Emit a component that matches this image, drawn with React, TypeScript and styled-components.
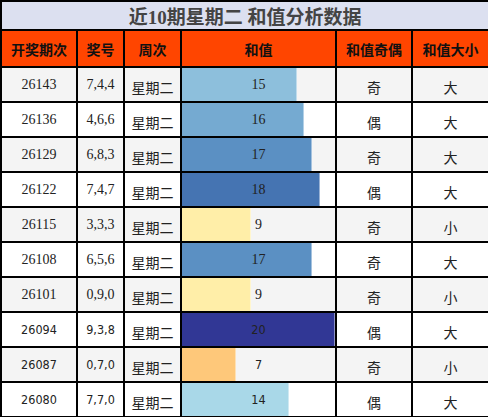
import React from 'react'
import styled, { createGlobalStyle } from 'styled-components'

const GlobalStyle = createGlobalStyle`
  html, body {
    margin: 0;
    padding: 0;
    background: #ffffff;
  }
`

interface Draw {
  issue: string
  digits: string
  weekday: string
  sum: number
  parity: string
  size: string
  sans?: boolean
}

const draws: Draw[] = [
  { issue: '26143', digits: '7,4,4', weekday: '星期二', sum: 15, parity: '奇', size: '大' },
  { issue: '26136', digits: '4,6,6', weekday: '星期二', sum: 16, parity: '偶', size: '大' },
  { issue: '26129', digits: '6,8,3', weekday: '星期二', sum: 17, parity: '奇', size: '大' },
  { issue: '26122', digits: '7,4,7', weekday: '星期二', sum: 18, parity: '偶', size: '大' },
  { issue: '26115', digits: '3,3,3', weekday: '星期二', sum: 9, parity: '奇', size: '小' },
  { issue: '26108', digits: '6,5,6', weekday: '星期二', sum: 17, parity: '奇', size: '大' },
  { issue: '26101', digits: '0,9,0', weekday: '星期二', sum: 9, parity: '奇', size: '小' },
  { issue: '26094', digits: '9,3,8', weekday: '星期二', sum: 20, parity: '偶', size: '大', sans: true },
  { issue: '26087', digits: '0,7,0', weekday: '星期二', sum: 7, parity: '奇', size: '小', sans: true },
  { issue: '26080', digits: '7,7,0', weekday: '星期二', sum: 14, parity: '偶', size: '大', sans: true },
]

const SUM_MAX = 20

const barColors: Record<number, string> = {
  7: '#fec87a',
  9: '#ffeea8',
  14: '#a9d8e8',
  15: '#8dbfdc',
  16: '#75aad1',
  17: '#5b90c3',
  18: '#4574b2',
  20: '#313795',
}

const SERIF = `"Liberation Serif", "Noto Sans CJK SC", serif`
const SANS = `"DejaVu Sans Condensed", "DejaVu Sans", "Noto Sans CJK SC", sans-serif`

const Table = styled.table`
  width: 488px;
  table-layout: fixed;
  border-collapse: collapse;
  border: 2px solid #000;
  font-family: ${SERIF};
  font-size: 14px;
  color: #222;
`

const TitleRow = styled.tr`
  height: 29px;
  background: #dce0f0;
`

const Title = styled.th`
  padding: 0;
  font-size: 19px;
  font-weight: bold;
  color: #444;
  text-align: center;
  border-bottom: 2px solid #000;
`

const HeadRow = styled.tr`
  height: 37px;
  background: #ff4500;
`

const HeadCell = styled.th`
  padding: 0;
  border: 2px solid #000;
  font-family: "Noto Sans CJK SC", sans-serif;
  font-size: 14px;
  font-weight: bold;
  color: #111;
  text-align: center;
`

const Row = styled.tr<{ $shade: boolean; $sans?: boolean }>`
  height: 35px;
  background: ${(p) => (p.$shade ? '#f4f4f4' : '#ffffff')};
  font-family: ${(p) => (p.$sans ? SANS : SERIF)};
  font-size: ${(p) => (p.$sans ? '12.5px' : '14px')};
`

const Cell = styled.td`
  padding: 0;
  border: 2px solid #000;
  text-align: center;
  vertical-align: middle;
`

const Cjk = styled.span`
  font-family: "Noto Sans CJK SC", sans-serif;
  font-size: 14px;
  position: relative;
  top: 2px;
`

const BarCell = styled.td`
  position: relative;
  padding: 0;
  border: 2px solid #000;
  text-align: center;
  vertical-align: middle;
`

const Bar = styled.div`
  position: absolute;
  left: 0;
  top: 0;
  bottom: 0;
  box-shadow: inset -1px 0 0 rgba(255, 255, 255, 0.45);
`

const BarValue = styled.span`
  position: relative;
  color: #222;
`

const columns = [76, 47, 57, 155, 76, 77]

export default function App() {
  return (
    <>
      <GlobalStyle />
      <Table>
        <colgroup>
          {columns.map((w, i) => (
            <col key={i} style={{ width: w }} />
          ))}
        </colgroup>
        <thead>
          <TitleRow>
            <Title colSpan={6}>近10期星期二 和值分析数据</Title>
          </TitleRow>
          <HeadRow>
            <HeadCell>开奖期次</HeadCell>
            <HeadCell>奖号</HeadCell>
            <HeadCell>周次</HeadCell>
            <HeadCell>和值</HeadCell>
            <HeadCell>和值奇偶</HeadCell>
            <HeadCell>和值大小</HeadCell>
          </HeadRow>
        </thead>
        <tbody>
          {draws.map((d, i) => (
            <Row key={d.issue} $shade={i % 2 === 0} $sans={d.sans}>
              <Cell>{d.issue}</Cell>
              <Cell>{d.digits}</Cell>
              <Cell>
                <Cjk>{d.weekday}</Cjk>
              </Cell>
              <BarCell>
                <Bar
                  style={{
                    width: `${(d.sum / SUM_MAX) * 100}%`,
                    background: barColors[d.sum],
                  }}
                />
                <BarValue>{d.sum}</BarValue>
              </BarCell>
              <Cell>
                <Cjk>{d.parity}</Cjk>
              </Cell>
              <Cell>
                <Cjk>{d.size}</Cjk>
              </Cell>
            </Row>
          ))}
        </tbody>
      </Table>
    </>
  )
}
